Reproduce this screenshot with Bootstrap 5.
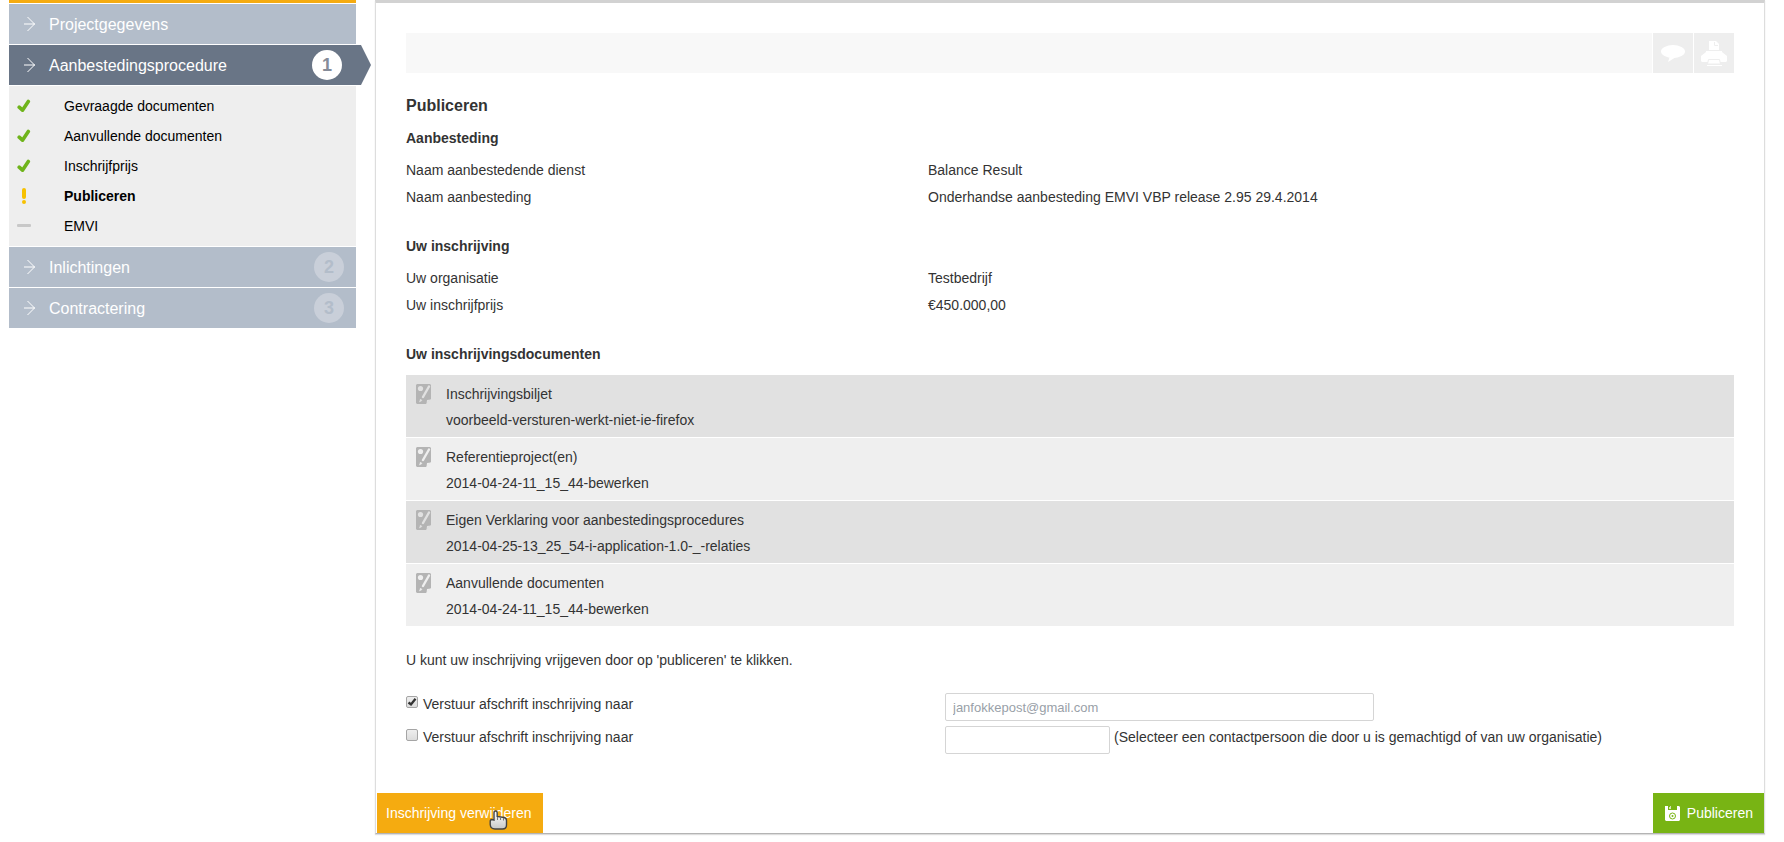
<!DOCTYPE html>
<html lang="nl">
<head>
<meta charset="utf-8">
<meta name="viewport" content="width=device-width, initial-scale=1">
<title>Publiceren</title>
<link href="https://cdn.jsdelivr.net/npm/bootstrap@5.3.0/dist/css/bootstrap.min.css" rel="stylesheet">
<style>
body { font-family: "Liberation Sans", Arial, sans-serif; font-size: 14px; line-height: 27px; color: #333; background: #fff; }
.page { padding: 0 19px 8px 9px; gap: 19px; }
.sidebar { width: 347px; border-top: 3px solid #f5ab10; padding-top: 1px; display: grid; gap: 1px; }
.step { height: 40px; padding: 0 12px 0 14px; background: #b3bdca; color: #fff; font-size: 16px; gap: 13px; text-decoration: none; position: relative; }
.step-active { background: #697586; margin-right: -15px; padding-right: 29px; clip-path: polygon(0 0, calc(100% - 10px) 0, 100% 50%, calc(100% - 10px) 100%, 0 100%); }
.step-nr { width: 30px; height: 30px; border-radius: 50%; background: #c9cfd9; color: #b3bdca; font-weight: bold; font-size: 18px; line-height: 30px; text-align: center; }
.step-active .step-nr { background: #fff; color: #858c99; }
.substeps { background: #eee; padding: 5px 0; }
.substeps a { height: 30px; color: #000; text-decoration: none; padding-left: 8px; gap: 33px; }
.main { border: 1px solid #ddd; border-top: 3px solid #d2d2d2; border-bottom: 1px solid #b4b4b4; box-shadow: 0 1px 1px #ddd; }
.content { padding: 30px 30px 0; }
.toolbar { gap: 1px; }
.tool-fill { background: #f8f8f8; }
.tool { width: 40px; height: 40px; border: 0; padding: 0; background: #eee; }
h1 { font-size: 16px; font-weight: bold; line-height: 32px; margin: 17px 0 0; }
h2 { font-size: 14px; font-weight: bold; line-height: 32px; margin: 0 0 3px; }
.pairs { display: grid; grid-template-columns: 522fr 806fr; margin: 0 0 19px; }
.pairs dt { font-weight: normal; }
.pairs dd { margin: 0; }
.docs { margin: 5px 0 21px; gap: 1px; }
.docs li { background: #efefef; padding: 6px 10px 4px; gap: 15px; line-height: 26px; color: #efefef; }
.docs li:nth-child(odd) { background: #e1e1e1; color: #e1e1e1; }
.docs li div { color: #333; }
.docs svg { margin-top: 3px; }
.copy-rows { margin-top: 19px; }
.copy-row { display: grid; grid-template-columns: 539fr 789fr; margin-bottom: 5px; line-height: 22px; }
.tick { appearance: none; width: 12px; height: 12px; margin: 3px 5px 0 0; border: 1px solid #a5a5a5; border-radius: 2px; background: linear-gradient(#eee, #dcdcdc); }
.tick:checked { background: url("data:image/svg+xml,%3Csvg xmlns='http://www.w3.org/2000/svg' viewBox='0 0 10 10'%3E%3Cpath d='M1.500 5.500L4 7.500L8.500 1.800' fill='none' stroke='%23333' stroke-width='2.300'/%3E%3C/svg%3E") center/10px, linear-gradient(#eee, #dcdcdc); }
.field { height: 28px; border: 1px solid #d5d5d5; border-radius: 2px; padding: 0 7px; font-size: 13px; color: #999fa8; background: #fff; }
.field-wide { width: 429px; }
.field-small { width: 165px; }
.actions { padding: 0 0 0 1px; margin-top: 39px; }
.action { height: 40px; border: 0; border-radius: 0; color: #fff; font-size: 14px; line-height: 20px; padding: 0 11px 0 9px; }
.action-del { background: #f5ab10; position: relative; }
.action-del svg { position: absolute; left: 112px; top: 17px; }
.action-pub { background: #78b414; padding: 0 11px 0 12px; gap: 7px; }
</style>
</head>
<body>
<svg class="d-none">
  <symbol id="arrow" viewBox="0 0 13 16"><path d="M1 8h11M4.500 1l7 7-7 7" fill="none" stroke="#fff"/></symbol>
  <symbol id="check" viewBox="0 0 14 14"><path d="M2.200 8.200l3.300 3L11.300 2.500" fill="none" stroke="#6fb41b" stroke-width="3.600" stroke-linecap="round" stroke-linejoin="round"/></symbol>
  <symbol id="doc" viewBox="0 0 15 20"><path d="M1 0h13l1 1v14l-5 5H1l-1-1V1z" fill="#b4b4b4"/><g fill="currentColor" stroke="currentColor"><circle cx="4.500" cy="4.500" r="2.600" stroke="none"/><path d="M13 2.500L7 13" fill="none" stroke-width="2.400" stroke-linecap="round"/><path d="M4.500 15l-1 3 2.500-1.500z" stroke-width=".5"/></g><path d="M10.500 20l.5-4 4-.5z" fill="currentColor"/></symbol>
</svg>
<div class="page d-flex align-items-start">
  <nav class="sidebar flex-shrink-0">
    <a href="#" class="step d-flex align-items-center"><svg width="13" height="16"><use href="#arrow"/></svg><span class="flex-grow-1">Projectgegevens</span></a>
    <a href="#" class="step step-active d-flex align-items-center"><svg width="13" height="16"><use href="#arrow"/></svg><span class="flex-grow-1">Aanbestedingsprocedure</span><span class="step-nr">1</span></a>
    <div class="substeps">
      <a href="#" class="d-flex align-items-center"><svg width="14" height="14"><use href="#check"/></svg>Gevraagde documenten</a>
      <a href="#" class="d-flex align-items-center"><svg width="14" height="14"><use href="#check"/></svg>Aanvullende documenten</a>
      <a href="#" class="d-flex align-items-center"><svg width="14" height="14"><use href="#check"/></svg>Inschrijfprijs</a>
      <a href="#" class="d-flex align-items-center fw-bold"><svg width="14" height="16"><rect x="5" width="4" height="11" rx="2" fill="#f7c100"/><rect x="5" y="12" width="4" height="4" rx="2" fill="#f7c100"/></svg>Publiceren</a>
      <a href="#" class="d-flex align-items-center"><svg width="14" height="4"><rect width="14" height="3" rx="1" fill="#c8c8c8"/></svg>EMVI</a>
    </div>
    <a href="#" class="step d-flex align-items-center"><svg width="13" height="16"><use href="#arrow"/></svg><span class="flex-grow-1">Inlichtingen</span><span class="step-nr">2</span></a>
    <a href="#" class="step d-flex align-items-center"><svg width="13" height="16"><use href="#arrow"/></svg><span class="flex-grow-1">Contractering</span><span class="step-nr">3</span></a>
  </nav>

  <main class="main flex-grow-1">
    <div class="content">
      <div class="toolbar d-flex">
        <div class="tool-fill flex-grow-1"></div>
        <button type="button" class="tool d-flex align-items-center justify-content-center" aria-label="Bericht"><svg width="26" height="18" viewBox="0 0 26 18" fill="#fff"><ellipse cx="13" cy="7.500" rx="12" ry="6.500"/><path d="M10 12l-2 6 8-5z"/></svg></button>
        <button type="button" class="tool d-flex align-items-center justify-content-center" aria-label="Afdrukken"><svg width="26" height="26" viewBox="0 0 26 26" fill="#fff"><path d="M8 1h7l3 3v6H8z"/><path d="M13.500 2v3.500H17" fill="none" stroke="#eee"/><path d="M5 11h16v1l5 4v5l-1 1H1l-1-1v-5l5-4z"/><path d="M7.500 19.500h11l1 4.500h-13z" stroke="#eee"/><path d="M6 25h15v1H6z"/></svg></button>
      </div>

      <h1>Publiceren</h1>
      <h2>Aanbesteding</h2>
      <dl class="pairs">
        <dt>Naam aanbestedende dienst</dt><dd>Balance Result</dd>
        <dt>Naam aanbesteding</dt><dd>Onderhandse aanbesteding EMVI VBP release 2.95 29.4.2014</dd>
      </dl>
      <h2>Uw inschrijving</h2>
      <dl class="pairs">
        <dt>Uw organisatie</dt><dd>Testbedrijf</dd>
        <dt>Uw inschrijfprijs</dt><dd>€450.000,00</dd>
      </dl>
      <h2>Uw inschrijvingsdocumenten</h2>
      <ul class="docs list-unstyled d-grid">
        <li class="d-flex"><svg width="15" height="20"><use href="#doc"/></svg><div>Inschrijvingsbiljet<br>voorbeeld-versturen-werkt-niet-ie-firefox</div></li>
        <li class="d-flex"><svg width="15" height="20"><use href="#doc"/></svg><div>Referentieproject(en)<br>2014-04-24-11_15_44-bewerken</div></li>
        <li class="d-flex"><svg width="15" height="20"><use href="#doc"/></svg><div>Eigen Verklaring voor aanbestedingsprocedures<br>2014-04-25-13_25_54-i-application-1.0-_-relaties</div></li>
        <li class="d-flex"><svg width="15" height="20"><use href="#doc"/></svg><div>Aanvullende documenten<br>2014-04-24-11_15_44-bewerken</div></li>
      </ul>
      <p class="m-0">U kunt uw inschrijving vrijgeven door op 'publiceren' te klikken.</p>

      <div class="copy-rows">
        <div class="copy-row">
          <div class="d-flex align-items-start"><input type="checkbox" class="tick" id="copy1" checked><label for="copy1">Verstuur afschrift inschrijving naar</label></div>
          <div><input type="email" class="field field-wide d-block" aria-label="E-mailadres" value="janfokkepost@gmail.com"></div>
        </div>
        <div class="copy-row">
          <div class="d-flex align-items-start"><input type="checkbox" class="tick" id="copy2"><label for="copy2">Verstuur afschrift inschrijving naar</label></div>
          <div class="d-flex align-items-start gap-1"><input type="text" class="field field-small" id="contact"><label for="contact">(Selecteer een contactpersoon die door u is gemachtigd of van uw organisatie)</label></div>
        </div>
      </div>
    </div>
    <div class="actions d-flex justify-content-between">
      <button type="button" class="action action-del">Inschrijving verwijderen<svg width="19" height="20" viewBox="0 0 19 20"><defs><linearGradient id="hand" x2="0" y2="1"><stop offset="0" stop-color="#fff"/><stop offset="1" stop-color="#c8c8c8"/></linearGradient></defs><path d="M5 10V3q0-2 1.600-2T8.200 3v3.500l6.800 1q2.500.6 2.500 3v4.500q0 4-4 4H6q-4.500 0-4.800-4.500V11.500Q1.200 9.500 3 9.500z" fill="url(#hand)" stroke="#444" stroke-width="1.400"/><path d="M8.500 7v3M11.500 7.500v2.500M14.500 8v2.500" stroke="#777"/></svg></button>
      <button type="button" class="action action-pub d-flex align-items-center"><svg width="15" height="15" viewBox="0 0 15 15"><path d="M0 0h3v4h9V0h2l1 1v13l-1 1H1l-1-1z" fill="#fff"/><path d="M5 0h1v3H4V1h1z" fill="#d5e8b5"/><circle cx="7.500" cy="10" r="3" fill="none" stroke="#78b414"/><circle cx="7.500" cy="10" r="1" fill="#78b414"/></svg>Publiceren</button>
    </div>
  </main>
</div>
<script src="https://cdn.jsdelivr.net/npm/bootstrap@5.3.0/dist/js/bootstrap.bundle.min.js"></script>
</body>
</html>
